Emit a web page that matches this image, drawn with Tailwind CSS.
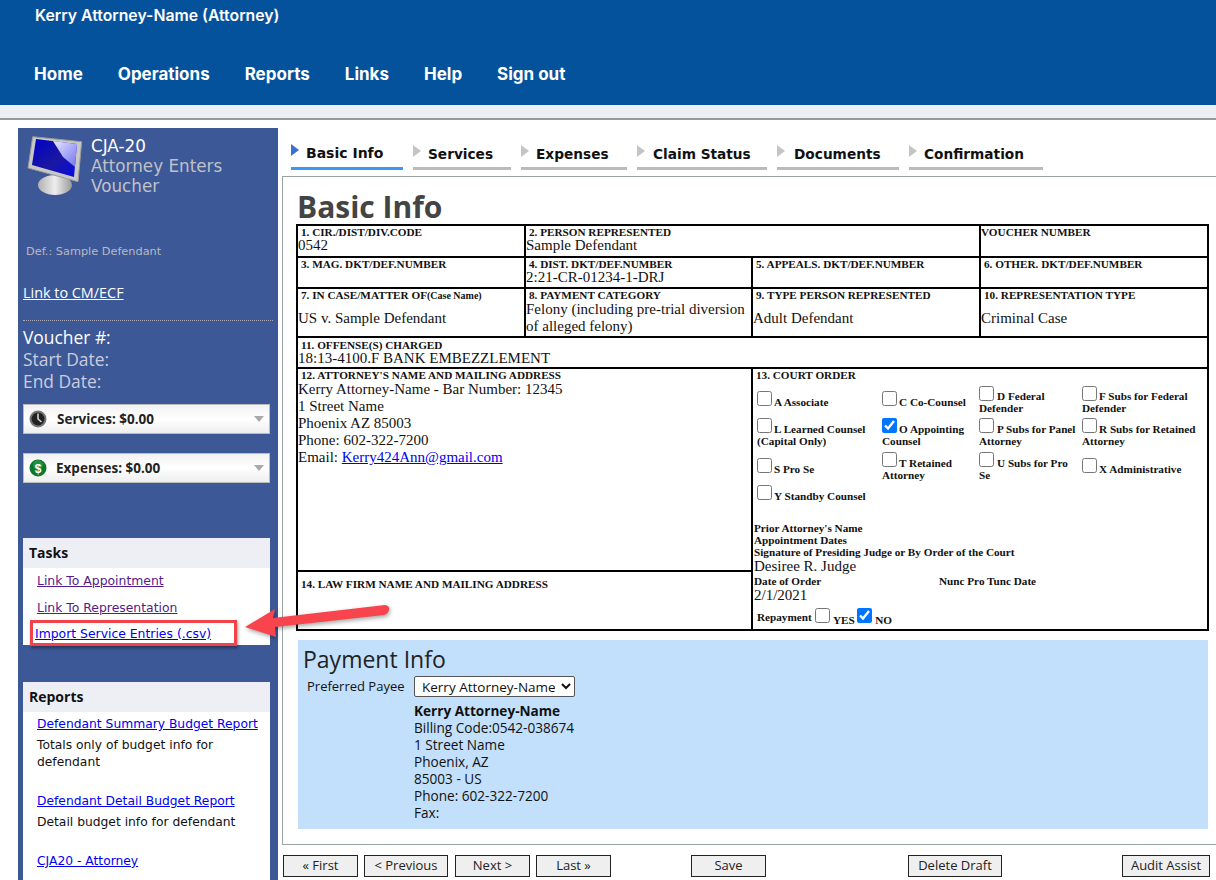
<!DOCTYPE html>
<html><head><meta charset="utf-8"><script src="https://cdn.jsdelivr.net/npm/@tailwindcss/browser@4"></script></head>
<body class="m-0 bg-white overflow-hidden font-['DejaVu_Sans',sans-serif]">
<div class="relative w-[1216px] h-[880px] overflow-hidden">
<header class="h-[105px] bg-[#03529b] text-white font-['Inter',sans-serif]">
  <div class="pl-[35px] pt-[6px] h-[61px] text-[15.8px] leading-[20px] font-semibold">Kerry Attorney-Name (Attorney)</div>
  <nav class="flex pl-[34px] gap-[35px] text-[17px] leading-[26px] font-bold">
    <span>Home</span><span>Operations</span><span>Reports</span><span>Links</span><span>Help</span><span>Sign out</span>
  </nav>
</header>
<div class="h-[15px] bg-[#eeeff4] border-b-2 border-[#999]"></div>
<div class="flex pt-[8px] pl-[18px]">
  <aside class="w-[260px] h-[760px] bg-[#3c5897] shrink-0 text-white overflow-hidden">
    <div class="flex h-[85px] pl-[9px] pt-[8px]">
      <svg class="w-[54px] h-[60px] shrink-0 overflow-visible" viewBox="0 0 54 60">
        <defs>
          <linearGradient id="sc" x1="0" y1="0" x2="1" y2="1"><stop offset="0" stop-color="#0000c8"/><stop offset=".55" stop-color="#1a18a0"/><stop offset="1" stop-color="#0808e8"/></linearGradient>
          <linearGradient id="gl" x1="0" y1="0" x2="1" y2="1"><stop offset="0" stop-color="#e8e8ff"/><stop offset="1" stop-color="#7070f0"/></linearGradient>
          <linearGradient id="st" x1="0" y1="0" x2="1" y2="0"><stop offset="0" stop-color="#b0b0b0"/><stop offset=".5" stop-color="#eee"/><stop offset="1" stop-color="#999"/></linearGradient>
        </defs>
        <ellipse cx="28" cy="49" rx="17" ry="10" fill="url(#st)"/>
        <path d="M5.700.7 54.700 5.700 51 45.700 1 32Z" fill="#c8c8c8" stroke="#9a9a9a"/>
        <path d="M9 3 50 8 47 41 5 29Z" fill="url(#sc)"/>
        <path d="M26 5 50 8 48 31 36 21Z" fill="url(#gl)"/>
      </svg>
      <div class="pl-[10px] text-[16.8px] leading-[20px] text-[#c0c2c8]"><div class="text-white">CJA-20</div><div>Attorney Enters</div><div>Voucher</div></div>
    </div>
    <div class="pl-[8px] pt-[32px] h-[70px] text-[11.3px] leading-[14px] text-[#b8bac4]">Def.: Sample Defendant</div>
    <div class="pl-[5px] text-[14.4px] leading-[20px] underline font-['Open_Sans',sans-serif]">Link to CM/ECF</div>
    <div class="border-b border-dotted border-[#aab] mx-[5px] mt-[17px]"></div>
    <div class="pl-[5px] pt-[5px] h-[83px] text-[17.4px] leading-[22px] font-['Open_Sans',sans-serif] text-[#ccd]"><div class="text-white">Voucher #:</div><div>Start Date:</div><div>End Date:</div></div>
    <div class="mx-[5px] w-[247px] h-[30px] bg-gradient-to-b from-[#f2f2f2] via-white to-[#eee] border border-[#bbb] flex items-center pl-[5px] text-[#222] text-[13.5px] font-bold font-['Open_Sans',sans-serif]">
      <svg class="w-[18px] h-[18px] shrink-0" viewBox="0 0 18 18"><circle cx="9" cy="9" r="8.5" fill="#777"/><circle cx="9" cy="9" r="6.500" fill="#222"/><path d="M9 3.500V9l3.500 3" stroke="#ddd" stroke-width="1.500" fill="none"/></svg>
      <span class="pl-[10px] grow">Services: $0.00</span>
      <span class="w-[21px] flex justify-center"><span class="border-x-[5px] border-x-transparent border-t-[6px] border-t-[#aaa]"></span></span>
    </div>
    <div class="mx-[5px] mt-[19px] w-[247px] h-[30px] bg-gradient-to-b from-[#f2f2f2] via-white to-[#eee] border border-[#bbb] flex items-center pl-[5px] text-[#222] text-[13.5px] font-bold font-['Open_Sans',sans-serif]">
      <svg class="w-[18px] h-[18px] shrink-0" viewBox="0 0 18 18"><circle cx="9" cy="9" r="8.500" fill="#0a7a2a"/><circle cx="9" cy="6" r="5" fill="#3aa85a" opacity=".5"/><text x="9" y="13.500" text-anchor="middle" font-size="12" font-family="Liberation Sans" fill="#fff">$</text></svg>
      <span class="pl-[9px] grow">Expenses: $0.00</span>
      <span class="w-[21px] flex justify-center"><span class="border-x-[5px] border-x-transparent border-t-[6px] border-t-[#aaa]"></span></span>
    </div>
    <section class="mx-[5px] mt-[55px] w-[247px] h-[107px] bg-white text-[12.4px]">
      <div class="h-[30px] bg-[#eeeff4] pl-[6px] text-[#111] text-[14px] leading-[30px] font-bold font-['Open_Sans',sans-serif]">Tasks</div>
      <div class="pl-[14px] leading-[26.500px] text-[#551a8b] underline"><div>Link To Appointment</div><div>Link To Representation</div></div>
      <div class="pl-[12px] leading-[26px] text-[#0000ee] underline">Import Service Entries (.csv)</div>
    </section>
    <section class="mx-[5px] mt-[37px] w-[247px] h-[300px] bg-white text-[12.3px] text-[#111]">
      <div class="h-[30px] bg-[#eeeff4] pl-[6px] text-[14px] leading-[30px] font-bold font-['Open_Sans',sans-serif]">Reports</div>
      <div class="pl-[14px] pr-[8px] pt-[4px] leading-[17px]">
        <div class="text-[#0000ee] underline pb-[4px]">Defendant Summary Budget Report</div>
        <div>Totals only of budget info for defendant</div>
        <div class="text-[#0000ee] underline pt-[22px] pb-[4px]">Defendant Detail Budget Report</div>
        <div>Detail budget info for defendant</div>
        <div class="text-[#0000ee] underline pt-[22px]">CJA20 - Attorney</div>
      </div>
    </section>
  </aside>
  <main class="grow pl-[4px]">
    <div class="flex h-[48px] pt-[11px] pl-[9px] gap-[10px] text-[13.7px] font-bold text-[#111]">
      <div class="w-[112px] h-[31px] border-b-[3px] border-[#3d98f4] flex items-start pt-[4px] gap-[7px] text-[14px]"><span class="mt-[1px] border-y-[6px] border-y-transparent border-l-[8px] border-l-[#3d6fd0]"></span>Basic Info</div>
      <div class="w-[98px] h-[31px] border-b-[3px] border-[#bbb] flex items-start pt-[5px] gap-[7px]"><span class="mt-[1px] border-y-[6px] border-y-transparent border-l-[8px] border-l-[#c4c4c4]"></span>Services</div>
      <div class="w-[106px] h-[31px] border-b-[3px] border-[#bbb] flex items-start pt-[5px] gap-[7px]"><span class="mt-[1px] border-y-[6px] border-y-transparent border-l-[8px] border-l-[#c4c4c4]"></span>Expenses</div>
      <div class="w-[130px] h-[31px] border-b-[3px] border-[#bbb] flex items-start pt-[5px] gap-[8px]"><span class="mt-[1px] border-y-[6px] border-y-transparent border-l-[8px] border-l-[#c4c4c4]"></span>Claim Status</div>
      <div class="w-[122px] h-[31px] border-b-[3px] border-[#bbb] flex items-start pt-[5px] gap-[9px]"><span class="mt-[1px] border-y-[6px] border-y-transparent border-l-[8px] border-l-[#c4c4c4]"></span>Documents</div>
      <div class="w-[134px] h-[31px] border-b-[3px] border-[#bbb] flex items-start pt-[5px] gap-[7px]"><span class="mt-[1px] border-y-[6px] border-y-transparent border-l-[8px] border-l-[#c4c4c4]"></span>Confirmation</div>
    </div>
    <div class="h-[669px] w-[940px] border border-[#9aa3a3] pl-[14px]">
      <h1 class="font-['Open_Sans',sans-serif] text-[30px] leading-[36px] pt-[12px] h-[47px] font-bold text-[#444]">Basic Info</h1>
      <table class="-ml-[1px] table-fixed border-collapse w-[911px] font-['Liberation_Serif',serif] text-[15px] leading-[14px] text-[#111]">
        <colgroup><col class="w-[228px]"><col class="w-[227px]"><col class="w-[228px]"><col class="w-[228px]"></colgroup>
        <tbody>
        <tr class="h-[32px] align-top">
          <td class="border-2 border-black p-0"><div class="text-[11.2px] font-bold leading-[11px] pl-[3px] pt-[1px]">1. CIR./DIST/DIV.CODE</div>0542</td>
          <td colspan="2" class="border-2 border-black p-0"><div class="text-[11.2px] font-bold leading-[11px] pl-[3px] pt-[1px]">2. PERSON REPRESENTED</div>Sample Defendant</td>
          <td class="border-2 border-black p-0"><div class="text-[11.2px] font-bold leading-[11px] pt-[1px]">VOUCHER NUMBER</div></td>
        </tr>
        <tr class="h-[31px] align-top">
          <td class="border-2 border-black p-0"><div class="text-[11.2px] font-bold leading-[11px] pl-[3px] pt-[1px]">3. MAG. DKT/DEF.NUMBER</div></td>
          <td class="border-2 border-black p-0"><div class="text-[11.2px] font-bold leading-[11px] pl-[3px] pt-[1px]">4. DIST. DKT/DEF.NUMBER</div>2:21-CR-01234-1-DRJ</td>
          <td class="border-2 border-black p-0"><div class="text-[11.2px] font-bold leading-[11px] pl-[3px] pt-[1px]">5. APPEALS. DKT/DEF.NUMBER</div></td>
          <td class="border-2 border-black p-0"><div class="text-[11.2px] font-bold leading-[11px] pl-[3px] pt-[1px]">6. OTHER. DKT/DEF.NUMBER</div></td>
        </tr>
        <tr class="h-[49px] align-top">
          <td class="border-2 border-black p-0"><div class="text-[11.2px] font-bold leading-[11px] pl-[3px] pt-[1px] h-[22px]">7. IN CASE/MATTER OF<span class="text-[10px]">(Case Name)</span></div>US v. Sample Defendant</td>
          <td class="border-2 border-black p-0"><div class="text-[11.2px] font-bold leading-[11px] pl-[3px] pt-[1px]">8. PAYMENT CATEGORY</div><div class="leading-[17px]">Felony (including pre-trial diversion of alleged felony)</div></td>
          <td class="border-2 border-black p-0"><div class="text-[11.2px] font-bold leading-[11px] pl-[3px] pt-[1px] h-[22px]">9. TYPE PERSON REPRESENTED</div>Adult Defendant</td>
          <td class="border-2 border-black p-0"><div class="text-[11.2px] font-bold leading-[11px] pl-[3px] pt-[1px] h-[22px]">10. REPRESENTATION TYPE</div>Criminal Case</td>
        </tr>
        <tr class="h-[31px] align-top">
          <td colspan="4" class="border-2 border-black p-0"><div class="text-[11.2px] font-bold leading-[12px] pl-[3px] pt-[1px]">11. OFFENSE(S) CHARGED</div>18:13-4100.F BANK EMBEZZLEMENT</td>
        </tr>
        <tr class="h-[203px] align-top">
          <td colspan="2" class="border-2 border-black p-0"><div class="text-[11.2px] font-bold leading-[11px] pl-[3px] pt-[1px]">12. ATTORNEY'S NAME AND MAILING ADDRESS</div><div class="leading-[17px]">Kerry Attorney-Name - Bar Number: 12345<br>1 Street Name<br>Phoenix AZ 85003<br>Phone: 602-322-7200<br>Email: <span class="text-[#0000ee] underline">Kerry424Ann@gmail.com</span></div></td>
          <td colspan="2" rowspan="2" class="border-2 border-black p-0">
            <div class="text-[11.2px] font-bold leading-[10px] pl-[3px] pt-[1px]">13. COURT ORDER</div>
            <div class="grid grid-cols-[125px_97px_103px_1fr] auto-rows-[33px] pl-[4px] pt-[6px] text-[11.2px] font-bold leading-[12px] h-[139px]">
              <div class="pt-[7px]"><input type="checkbox" class="relative -top-[2px] w-[15px] h-[15px] m-0 mr-[2px] align-[-2px]">A Associate</div>
              <div class="pt-[7px]"><input type="checkbox" class="relative -top-[2px] w-[15px] h-[15px] m-0 mr-[2px] align-[-2px]">C Co-Counsel</div>
              <div class="pt-[1px]"><input type="checkbox" class="relative -top-[1px] w-[15px] h-[15px] m-0 mr-[3px] align-[-2px]">D Federal Defender</div>
              <div class="pt-[1px]"><input type="checkbox" class="relative -top-[1px] w-[15px] h-[15px] m-0 mr-[2px] align-[-2px]">F Subs for Federal Defender</div>
              <div class="pt-[1px]"><input type="checkbox" class="relative -top-[2px] w-[15px] h-[15px] m-0 mr-[2px] align-[-2px]">L Learned Counsel (Capital Only)</div>
              <div class="pt-[1px]"><input type="checkbox" checked class="relative -top-[2px] w-[15px] h-[15px] m-0 mr-[2px] align-[-2px]">O Appointing Counsel</div>
              <div class="pt-[1px]"><input type="checkbox" class="relative -top-[2px] w-[15px] h-[15px] m-0 mr-[3px] align-[-2px]">P Subs for Panel Attorney</div>
              <div class="pt-[1px]"><input type="checkbox" class="relative -top-[2px] w-[15px] h-[15px] m-0 mr-[2px] align-[-2px]">R Subs for Retained Attorney</div>
              <div class="pt-[8px]"><input type="checkbox" class="relative -top-[2px] w-[15px] h-[15px] m-0 mr-[2px] align-[-2px]">S Pro Se</div>
              <div class="pt-[2px] pr-[4px]"><input type="checkbox" class="relative -top-[2px] w-[15px] h-[15px] m-0 mr-[2px] align-[-2px]">T Retained Attorney</div>
              <div class="pt-[2px] pr-[8px]"><input type="checkbox" class="relative -top-[2px] w-[15px] h-[15px] m-0 mr-[3px] align-[-2px]">U Subs for Pro Se</div>
              <div class="pt-[8px]"><input type="checkbox" class="relative -top-[2px] w-[15px] h-[15px] m-0 mr-[2px] align-[-2px]">X Administrative</div>
              <div class="col-span-2 pt-[2px]"><input type="checkbox" class="relative -top-[2px] w-[15px] h-[15px] m-0 mr-[2px] align-[-2px]">Y Standby Counsel</div>
            </div>
            <div class="pl-[1px] pt-[3px] text-[11.2px] font-bold leading-[12px]">Prior Attorney's Name<br>Appointment Dates<br>Signature of Presiding Judge or By Order of the Court</div>
            <div class="pl-[1px] leading-[16px]">Desiree R. Judge</div>
            <div class="pl-[1px] flex text-[11.2px] font-bold leading-[12px] pt-[1px]"><span class="w-[185px]">Date of Order</span><span>Nunc Pro Tunc Date</span></div>
            <div class="pl-[1px] leading-[16px]">2/1/2021</div>
            <div class="pl-[4px] pt-[5px] text-[11.2px] font-bold leading-[14px]">Repayment <input type="checkbox" class="w-[15px] h-[15px] m-0 ml-[1px] align-[-2px]"> <span class="relative top-[3px]">YES</span> <input type="checkbox" checked class="w-[15px] h-[15px] m-0 align-[-2px]"> <span class="relative top-[3px]">NO</span></div>
          </td>
        </tr>
        <tr class="h-[59px] align-top">
          <td colspan="2" class="border-2 border-black p-0"><div class="text-[11.2px] font-bold leading-[10px] pl-[3px] pt-[7px]">14. LAW FIRM NAME AND MAILING ADDRESS</div></td>
        </tr>
        </tbody>
      </table>
      <section class="mt-[9px] ml-[1px] w-[910px] h-[189px] bg-[#c2e0fb] font-['Open_Sans',sans-serif] text-[13.6px] leading-[17px] text-[#111]">
        <div class="pl-[5px] pt-[5px] text-[23px] leading-[28px] text-[#222]">Payment Info</div>
        <div class="flex items-center pl-[9px] pt-[3px] h-[24px]"><span class="w-[107px] text-[13px]">Preferred Payee</span>
          <select class="w-[161px] h-[21px] bg-white border border-[#555] rounded-[2px] text-[13.500px] px-[3px] appearance-auto"><option>Kerry Attorney-Name</option></select></div>
        <div class="pl-[116px] pt-[5px]"><div class="font-bold">Kerry Attorney-Name</div><div>Billing Code:0542-038674</div><div>1 Street Name</div><div>Phoenix, AZ</div><div>85003 - US</div><div>Phone: 602-322-7200</div><div>Fax:</div></div>
      </section>
    </div>
    <div class="flex pt-[10px] text-[13px] text-[#222] font-['Open_Sans',sans-serif]">
      <button class="ml-[1px] w-[75px] h-[22px] bg-[#efefef] border border-[#222]">« First</button>
      <button class="ml-[6px] w-[84px] h-[22px] bg-[#efefef] border border-[#222]">&lt; Previous</button>
      <button class="ml-[7px] w-[75px] h-[22px] bg-[#efefef] border border-[#222]">Next &gt;</button>
      <button class="ml-[6px] w-[75px] h-[22px] bg-[#efefef] border border-[#222]">Last »</button>
      <button class="ml-[80px] w-[75px] h-[22px] bg-[#efefef] border border-[#222]">Save</button>
      <button class="ml-[142px] w-[94px] h-[22px] bg-[#efefef] border border-[#222]">Delete Draft</button>
      <button class="ml-[120px] w-[88px] h-[22px] bg-[#efefef] border border-[#222]">Audit Assist</button>
    </div>
  </main>
</div>
<div class="absolute left-[30px] top-[620px] w-[207px] h-[26px] border-[3px] border-[#f2424a] shadow-[1px_2px_3px_rgba(0,0,0,.4)]"></div>
<svg class="absolute left-[240px] top-[600px] w-[155px] h-[45px]" viewBox="0 0 155 45" style="filter:drop-shadow(1px 2px 2px rgba(0,0,0,.35))"><path d="M5 27 35 9 33 18 145 5Q150 6 149 10 148 14 144 15L35 27 36 37Z" fill="#f8444c"/></svg>
</div>
</body></html>
